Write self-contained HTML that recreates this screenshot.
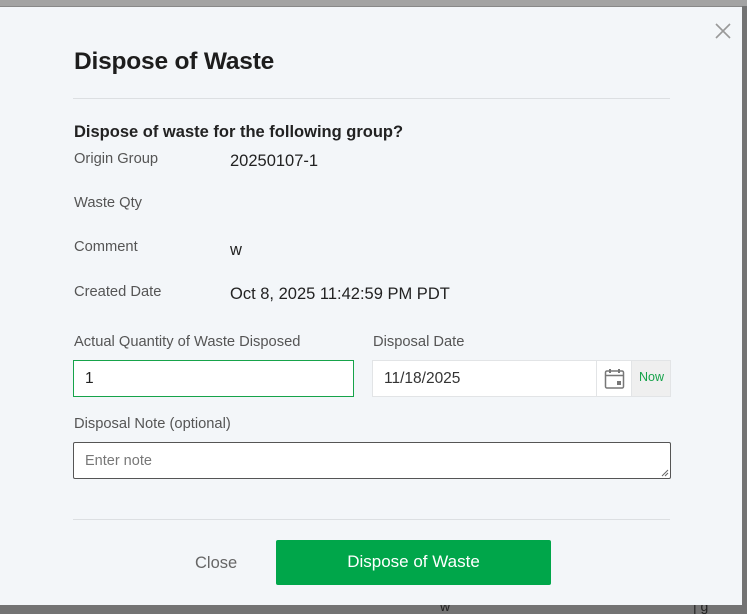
<!DOCTYPE html>
<html><head><style>
*{box-sizing:border-box;margin:0;padding:0}
body{width:747px;height:609px;background:#737373;position:relative;overflow:hidden;font-family:"Liberation Sans",Arial,sans-serif}
.top{position:absolute;left:0;top:0;width:747px;height:6px;background:#a3a3a3}
.modal{position:absolute;left:0;top:6px;width:742px;height:599px;background:#f3f6f9;border-top:1px solid #888}
.t{position:absolute;white-space:nowrap}
.lbl{font-size:14.7px;color:#555}
.val{font-size:16.5px;color:#222}
</style></head><body>
<div class="top"></div>
<div class="t" style="left:440px;top:598px;color:#222;font-size:14px">w</div>
<div class="t" style="left:693px;top:598px;color:#222;font-size:14px">| g</div>
<div class="modal">
<svg class="t" style="left:715px;top:16px" width="16" height="16"><path d="M1 1L15 15M15 1L1 15" stroke="#999" stroke-width="1.6"/></svg>
<div class="t" style="left:74px;top:41px;font-size:24.5px;font-weight:bold;color:#1d1d1d;letter-spacing:-0.2px">Dispose of Waste</div>
<div class="t" style="left:73px;top:91px;width:597px;height:1px;background:#dcdfe2"></div>
<div class="t" style="left:74px;top:116px;font-size:16.5px;font-weight:bold;color:#222">Dispose of waste for the following group?</div>
<div class="t lbl" style="left:74px;top:144px">Origin Group</div>
<div class="t val" style="left:230px;top:145px">20250107-1</div>
<div class="t lbl" style="left:74px;top:188px">Waste Qty</div>
<div class="t lbl" style="left:74px;top:232px">Comment</div>
<div class="t val" style="left:230px;top:234px">w</div>
<div class="t lbl" style="left:74px;top:277px">Created Date</div>
<div class="t val" style="left:230px;top:278px">Oct 8, 2025 11:42:59 PM PDT</div>
<div class="t lbl" style="left:74px;top:327px">Actual Quantity of Waste Disposed</div>
<div class="t" style="left:73px;top:353px;width:281px;height:37px;background:#fff;border:1px solid #16a34a"></div>
<div class="t val" style="left:85px;top:363px;font-size:15.5px">1</div>
<div class="t lbl" style="left:373px;top:327px">Disposal Date</div>
<div class="t" style="left:372px;top:353px;width:299px;height:37px;background:#fff;border:1px solid #e2e4e6"></div>
<div class="t val" style="left:384px;top:363px;font-size:15.5px;color:#333">11/18/2025</div>
<div class="t" style="left:596px;top:354px;width:1px;height:35px;background:#e2e4e6"></div>
<svg class="t" style="left:604px;top:360px" width="22" height="23"><rect x="1.5" y="4" width="18" height="17" rx="1.5" fill="none" stroke="#777" stroke-width="1.5"/><line x1="1.5" y1="8.5" x2="19.5" y2="8.5" stroke="#777" stroke-width="1.5"/><rect x="5" y="2" width="2" height="4" fill="#777"/><rect x="14" y="2" width="2" height="4" fill="#777"/><rect x="13" y="14" width="4" height="4" fill="#777"/></svg>
<div class="t" style="left:631px;top:354px;width:39px;height:35px;background:#efefef;border-left:1px solid #e2e4e6"></div>
<div class="t" style="left:639px;top:363px;font-size:12.5px;color:#16a34a">Now</div>
<div class="t lbl" style="left:74px;top:409px">Disposal Note (optional)</div>
<div class="t" style="left:73px;top:435px;width:598px;height:37px;background:#fff;border:1px solid #555;border-radius:2px"></div>
<svg class="t" style="left:661px;top:462px" width="8" height="8"><path d="M7 1L1 7M7 4L4 7" stroke="#666" stroke-width="1"/></svg>
<div class="t" style="left:85px;top:446px;font-size:14.5px;color:#777">Enter note</div>
<div class="t" style="left:73px;top:512px;width:597px;height:1px;background:#dcdfe2"></div>
<div class="t" style="left:195px;top:547px;font-size:16.5px;color:#666">Close</div>
<div class="t" style="left:276px;top:533px;width:275px;height:45px;background:#00a64a;border-radius:2px;color:#fff;font-size:17px;text-align:center;line-height:44px">Dispose of Waste</div>
</div>
</body></html>
